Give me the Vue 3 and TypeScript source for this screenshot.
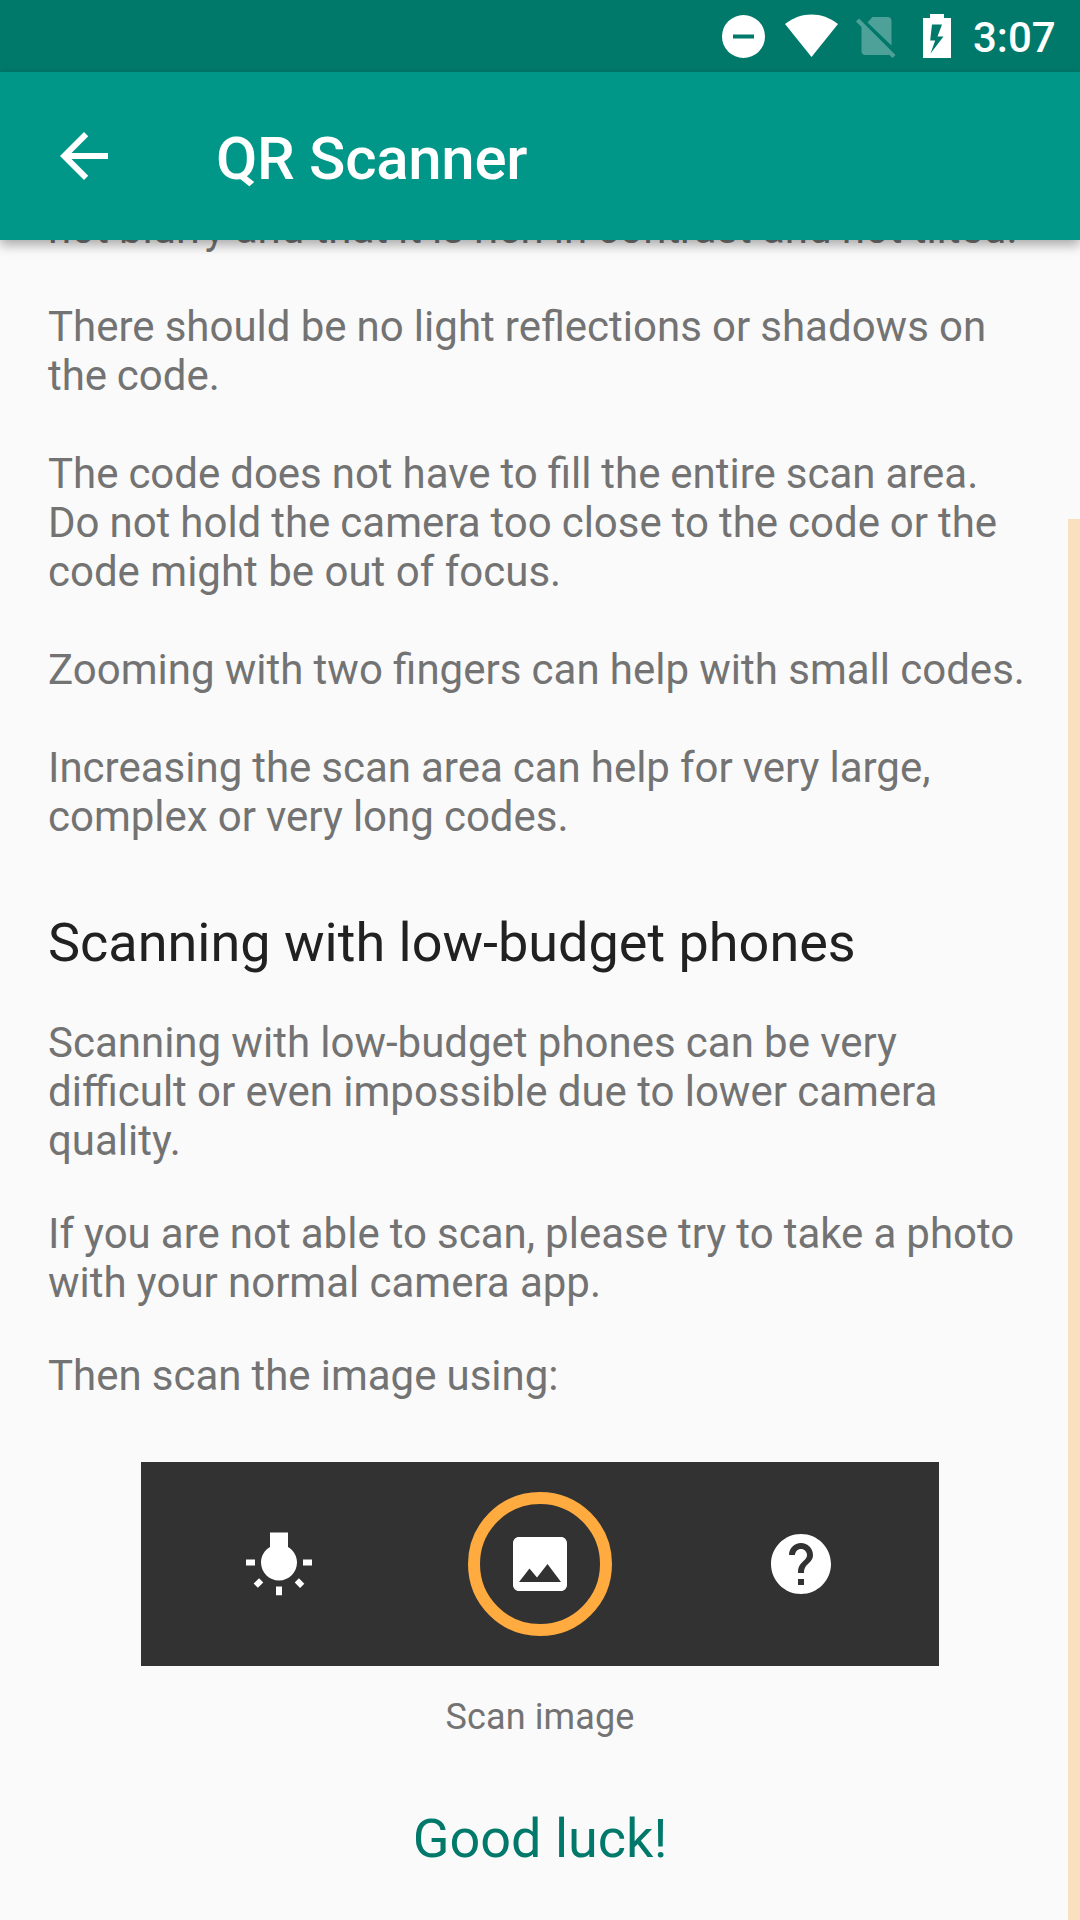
<script setup lang="ts">
interface Line {
  text: string
  /** word spacing in px */
  space: number
}
const line = (text: string, space = 0): Line => ({ text, space })

const tips: Line[][] = [
  [line('not blurry and that it is rich in contrast and not tilted.', -0.33)],
  [line('There should be no light reflections or shadows on', -0.3), line('the code.', -0.8)],
  [
    line('The code does not have to fill the entire scan area.', -0.5),
    line('Do not hold the camera too close to the code or the', -0.47),
    line('code might be out of focus.'),
  ],
  [line('Zooming with two fingers can help with small codes.', -0.17)],
  [line('Increasing the scan area can help for very large,', -0.45), line('complex or very long codes.', -0.35)],
]
const lowBudget: Line[][] = [
  [
    line('Scanning with low-budget phones can be very', -0.2),
    line('difficult or even impossible due to lower camera', -0.17),
    line('quality.'),
  ],
  [line('If you are not able to scan, please try to take a photo', -0.36), line('with your normal camera app.', -0.2)],
  [line('Then scan the image using:', -0.35)],
]
</script>

<template>
  <div class="screen">
    <header class="status">
      <svg class="dnd" width="44" height="44" viewBox="0.5 -0.5 44 44"><path fill-rule="evenodd" d="M22 .5a21.5 21.5 0 1 0 0 43a21.5 21.5 0 1 0 0-43zM11.500 20h21v4h-21z" /></svg>
      <svg class="wifi" width="54" height="44" viewBox="0 0 54 44"><path d="M0 10C8.500 3.500 17 .5 26.500 .5S44.500 3.500 53 10L26.500 43z" /></svg>
      <svg class="sim" width="40" height="44" viewBox="0 0 40 44"><path d="M11.500 8.500L16.500 3H31.500q4 0 4 4v24.500zM5.500 10.500L34.500 39.500Q33.500 41 31.500 41H9.500q-4 0-4-4z" /><path d="M3 4.500L0 7.500L36.500 44L39.500 41z" /></svg>
      <svg class="battery" width="28" height="44" viewBox="0 0 28 44"><path fill-rule="evenodd" d="M7 0h14v4h7v40H0V4h7zM9 10.500L7.200 26.500h5L7.500 39.500L20.500 22.400h-6l4.500-11.900z" /></svg>
      <span class="time">3:07</span>
    </header>
    <div class="toolbar">
      <svg width="72" height="72" viewBox="0 0 24 24"><path d="M20 11H7.830l5.590-5.590L12 4l-8 8 8 8 1.410-1.410L7.830 13H20v-2z" /></svg>
      <h1>QR Scanner</h1>
    </div>
    <main>
      <section class="tips">
        <p v-for="(lines, i) in tips" :key="i"><span v-for="l in lines" :key="l.text" :style="{ wordSpacing: l.space + 'px' }">{{ l.text }}</span></p>
      </section>
      <h2>Scanning with low-budget phones</h2>
      <section class="budget">
        <p v-for="(lines, i) in lowBudget" :key="i"><span v-for="l in lines" :key="l.text" :style="{ wordSpacing: l.space + 'px' }">{{ l.text }}</span></p>
      </section>
      <div class="panel">
        <svg width="72" height="72" viewBox="0 0 24 24"><path d="M3.550 18.540l1.410 1.410 1.800-1.790-1.410-1.410-1.800 1.790zM11 22.450h2V19.500h-2v2.950zM4 10.500H1v2h3v-2zm11-4.190V1.500H9v4.810C7.210 7.350 6 9.280 6 11.500c0 3.310 2.690 6 6 6s6-2.690 6-6c0-2.220-1.210-4.150-3-5.190zm5 4.190v2h3v-2h-3zm-2.760 7.660l1.790 1.800 1.410-1.410-1.800-1.790-1.400 1.400z" /></svg>
        <div class="ring">
          <svg width="72" height="72" viewBox="0 0 24 24"><path d="M21 19V5c0-1.100-.9-2-2-2H5c-1.100 0-2 .9-2 2v14c0 1.100.9 2 2 2h14c1.100 0 2-.9 2-2zM8.500 13.500l2.500 3.010L14.500 12l4.500 6H5l3.500-4.500z" /></svg>
        </div>
        <svg width="72" height="72" viewBox="0 0 24 24"><path d="M12 2C6.480 2 2 6.480 2 12s4.480 10 10 10 10-4.480 10-10S17.520 2 12 2zm1 17h-2v-2h2v2zm2.070-7.750l-.9.920C13.450 12.900 13 13.500 13 15h-2v-.5c0-1.100.45-2.100 1.170-2.830l1.240-1.260c.37-.36.59-.86.59-1.410 0-1.100-.9-2-2-2s-2 .9-2 2H8c0-2.210 1.790-4 4-4s4 1.790 4 4c0 .88-.36 1.680-.93 2.250z" /></svg>
      </div>
      <div class="caption">Scan image</div>
      <div class="luck">Good luck!</div>
      <div class="scrollbar"></div>
    </main>
  </div>
</template>

<style>
body { margin: 0; }
</style>

<style scoped>
.screen { width: 1080px; height: 1920px; overflow: hidden; display: flex; flex-direction: column; background: #fafafa; font-family: Roboto, sans-serif; }
svg { display: block; fill: #fff; flex: none; }
.status { height: 72px; flex: none; box-sizing: border-box; padding: 14px 20px 0 722px; background: #00796b; display: flex; align-items: flex-start; color: #fff; }
.wifi { margin-left: 19px; }
.sim { margin-left: 17px; opacity: .3; }
.battery { margin-left: 27px; }
.time { margin-left: 22px; margin-top: -1px; font-size: 42px; line-height: 50px; font-weight: 500; }
.toolbar { position: relative; z-index: 1; height: 168px; flex: none; box-sizing: border-box; padding-left: 48px; background: #009688; display: flex; align-items: center; gap: 96px; color: #fff; box-shadow: 0 5px 11px rgba(0, 0, 0, .33); }
h1 { margin: 6px 0 0; font-size: 60px; line-height: 70px; font-weight: 500; letter-spacing: -.3px; }
main { position: relative; flex: 1; min-height: 0; padding: 0 48px; display: flex; flex-direction: column; }
.tips { margin-top: -36px; display: flex; flex-direction: column; gap: 49px; }
.budget { margin-top: 44px; display: flex; flex-direction: column; gap: 44px; }
p { margin: 0; color: #737373; font-size: 42px; line-height: 49px; }
p span { display: block; white-space: nowrap; }
h2 { margin: 70px 0 0; color: #212121; font-size: 54px; line-height: 63px; font-weight: 400; }
.panel { margin: 62px auto 0; width: 798px; height: 204px; flex: none; background: #323232; display: flex; align-items: center; justify-content: center; gap: 153px; }
.ring { width: 144px; height: 144px; box-sizing: border-box; border: 12px solid #ffab40; border-radius: 50%; display: flex; align-items: center; justify-content: center; flex: none; }
.caption { margin-top: 30px; text-align: center; color: #737373; font-size: 36px; line-height: 42px; letter-spacing: .1px; }
.luck { margin-top: 69px; text-align: center; color: #00796b; font-size: 54px; line-height: 63px; }
.scrollbar { position: absolute; right: 0; top: 279px; bottom: 0; width: 12px; background: #fbe0bf; }
</style>
